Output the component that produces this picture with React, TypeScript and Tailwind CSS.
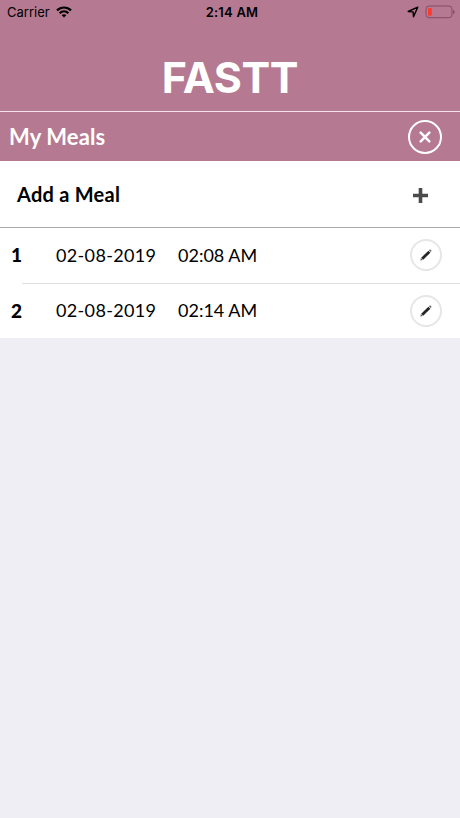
interface Meal {
  id: number;
  date: string;
  time: string;
}

const meals: Meal[] = [
  { id: 1, date: "02-08-2019", time: "02:08 AM" },
  { id: 2, date: "02-08-2019", time: "02:14 AM" },
];

function WifiIcon() {
  return (
    <svg width="16" height="12" viewBox="0 0 16 12" fill="none" stroke="#000" strokeWidth="2.2">
      <path d="M1 4.4C5 .5 11 .5 15 4.4" />
      <path d="M3.6 7.2c2.6-2.4 6.2-2.4 8.8 0" />
      <path d="M8 11.5 5.6 9.1c1.4-1.2 3.4-1.2 4.8 0Z" fill="#000" stroke="none" />
    </svg>
  );
}

function StatusBar() {
  return (
    <div className="grid h-6 grid-cols-3 items-center pl-[7px] pr-[5px] font-['Inter',sans-serif] text-[13px] leading-none text-black">
      <div className="flex items-center gap-[6px]">
        <span>Carrier</span>
        <WifiIcon />
      </div>
      <span className="pl-[2px] text-center font-semibold tracking-[0.2px]">2:14 AM</span>
      <div className="flex items-center justify-end gap-[6px]">
        <svg width="12" height="12" viewBox="0 0 12 12" fill="none" stroke="#000" strokeWidth="1.4" strokeLinejoin="round">
          <path d="M10.7 1.2 1.2 5.5l4.9.4.4 4.9Z" />
        </svg>
        <svg width="30" height="14" viewBox="0 0 30 14">
          <rect x="1" y="1" width="26" height="11.7" rx="3" fill="none" stroke="#874c65" />
          <rect x="3" y="3" width="3.8" height="7.8" rx="1" fill="#fb3a30" />
          <path d="M28.3 5v4c1.5-.6 1.5-3.4 0-4Z" fill="#683b4e" />
        </svg>
      </div>
    </div>
  );
}

function MealRow({ meal, last }: { meal: Meal; last: boolean }) {
  return (
    <li className="flex bg-white">
      <span className="w-[22px] shrink-0 pl-[11px] pt-[14px] text-[19px] font-black leading-[26px]">{meal.id}</span>
      <div className={last ? "flex h-[54px] flex-1 items-center pl-[34px] pr-[18px]" : "flex h-14 flex-1 items-center border-b border-[#e0e0e2] pl-[34px] pr-[18px]"}>
        <span className="w-[122px] pb-[2px] text-lg tracking-[0.35px]">{meal.date}</span>
        <span className="flex-1 pb-[2px] text-lg">{meal.time}</span>
        <button type="button" aria-label="Edit meal" className="mb-px flex size-8 items-center justify-center rounded-full border-2 border-[#e6e6e6]">
          <svg width="14" height="14" viewBox="0 0 14 14" fill="#252525">
            <path d="m2.2 9.7 7.2-7 2 2-7.2 7Z" />
            <path d="m1.9 10 1.8 1.9-2.3.5Z" fill="#555" />
            <path d="m9.9 2.2.7-.7c.7-.5 2.4 1.1 1.8 1.8l-.7.8Z" fill="#666" />
          </svg>
        </button>
      </div>
    </li>
  );
}

export default function App() {
  return (
    <div className="min-h-screen bg-[#efeef4] font-['Lato',sans-serif] text-black">
      <header className="bg-[#b57991] text-white">
        <div className="h-28 border-b border-[#f4e3ea]">
          <StatusBar />
          <h1 className="pt-[26px] text-center font-['Inter',sans-serif] text-[43px] font-bold leading-[54px] tracking-[-0.4px]">FASTT</h1>
        </div>
        <div className="flex h-[49px] items-center justify-between pl-[9px] pr-[18px]">
          <h2 className="text-[22px] font-bold tracking-[0.1px]">My Meals</h2>
          <button type="button" aria-label="Close" className="flex size-[34px] items-center justify-center rounded-full border-2 border-white">
            <svg width="12" height="12" viewBox="0 0 12 12" stroke="#fff" strokeWidth="2.5" strokeLinecap="round">
              <path d="m1.7 1.7 8.6 8.6M10.3 1.7l-8.6 8.6" />
            </svg>
          </button>
        </div>
      </header>
      <button type="button" className="flex h-[67px] w-full items-center justify-between border-b border-[#a9a9a9] bg-white pl-[17px] pr-8">
        <span className="text-xl font-bold tracking-[0.25px]">Add a Meal</span>
        <svg className="mt-[2px]" width="15" height="15" viewBox="0 0 15 15" stroke="#4b4b4b" strokeWidth="3.6">
          <path d="M7.5 0v15M0 7.5h15" />
        </svg>
      </button>
      <ul>
        {meals.map((meal, i) => (
          <MealRow key={meal.id} meal={meal} last={i === meals.length - 1} />
        ))}
      </ul>
    </div>
  );
}
